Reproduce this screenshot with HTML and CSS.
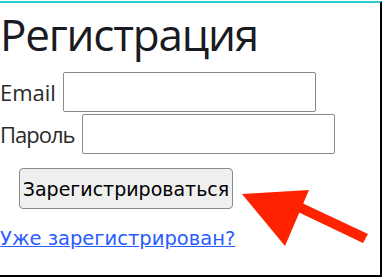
FILE: index.html
```html
<!DOCTYPE html>
<html lang="ru">
<head>
  <meta charset="UTF-8">
  <title>Регистрация</title>
  <link rel="stylesheet" href="styles.css">
</head>
<body>
  <div class="frame">
    <h1>Регистрация</h1>
    <form class="reg-form">
      <div class="row">
        <label for="email">Email</label>
        <input type="text" id="email">
      </div>
      <div class="row">
        <label for="pass" class="pass-label">Пароль</label>
        <input type="password" id="pass">
      </div>
      <button type="button" class="submit">Зарегистрироваться</button>
    </form>
    <a href="#" class="login-link">Уже зарегистрирован?</a>

    <!-- стрелка-подсказка -->
    <svg class="arrow" width="140" height="70" viewBox="0 0 140 70">
      <polygon points="2,18 69,14 45,70" fill="#ff2200"/>
      <polygon points="58,36 62,27 128,58 123,67" fill="#ff2200"/>
    </svg>
  </div>
</body>
</html>
```

FILE: styles.css
```css
body {
  margin: 0;
  padding: 0;
  background: #ffffff;
}
.frame {
  position: relative;
  box-sizing: border-box;
  height: 276px;
  margin-top: 1px;
  border-top: 2px solid #2ad0cf;
  border-right: 2px solid #000000;
  border-bottom: 2px solid #000000;
  font-family: 'Open Sans', sans-serif;
  color: #1f1f1f;
}
h1 {
  font-family: 'Open Sans', sans-serif;
  font-weight: normal;
  font-size: 44px;
  letter-spacing: -1.2px;
  line-height: 56px;
  margin: 3px 0 10px 0;
  color: #1a1a22;
}
.row {
  display: flex;
  align-items: center;
  gap: 7px;
  margin-bottom: 2px;
}
.row label {
  font-size: 22px;
  color: #2a2a2a;
}
.pass-label {
  letter-spacing: -1px;
}
.row input {
  box-sizing: border-box;
  width: 253px;
  height: 40px;
  border: 1px solid #8a8a8a;
  border-radius: 2px;
  margin: 0;
}
.submit {
  margin: 12px 0 0 19px;
  box-sizing: border-box;
  width: 214px;
  height: 41px;
  padding: 0;
  font-family: 'DejaVu Sans', sans-serif;
  font-size: 19px;
  color: #000000;
  background: #efefef;
  border: 1px solid #8a8a8a;
  border-radius: 4px;
}
.login-link {
  display: inline-block;
  margin-top: 18px;
  font-family: 'DejaVu Sans', sans-serif;
  font-size: 19.5px;
  color: #2a5cff;
}
.arrow {
  position: absolute;
  left: 240px;
  top: 173px;
}
```
